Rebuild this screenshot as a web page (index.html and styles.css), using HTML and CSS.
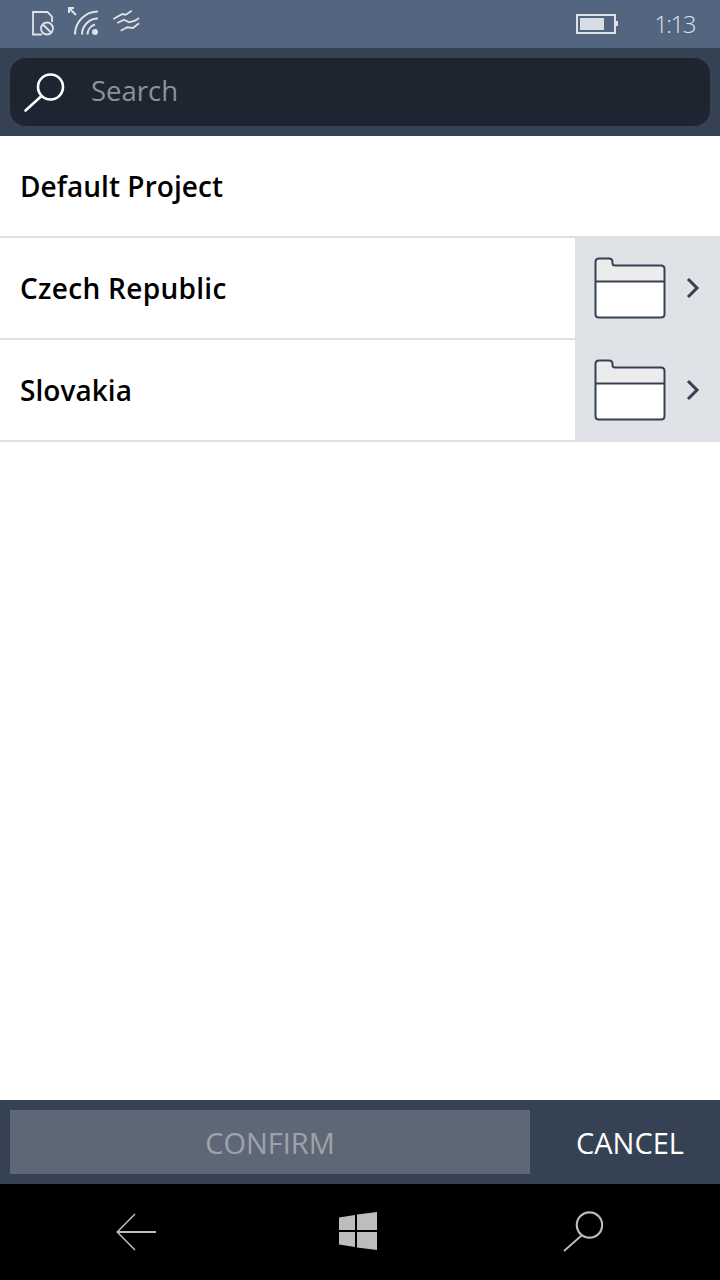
FILE: index.html
```html
<!DOCTYPE html>
<html lang="en">
<head>
<meta charset="utf-8">
<title>Projects</title>
<link rel="stylesheet" href="styles.css">
</head>
<body>
<div class="screen">
  <header class="status">
    <div class="status-left">
      <svg class="ic-doc" width="22" height="25" viewBox="0 0 22 25" fill="none" stroke="#dfe2e7" stroke-width="1.8">
        <path d="M10 23.500H1V1H15.500L20 5.500V11"/>
        <circle cx="15" cy="17.500" r="6"/>
        <path d="M11 13.500L19 21.500"/>
      </svg>
      <svg class="ic-wifi" width="32" height="30" viewBox="0 0 32 30" fill="none" stroke="#dfe2e7" stroke-width="2">
        <path d="M8 9L1.500 2.500M1 7V2H6"/>
        <path d="M7 28.500A23 23 0 0 1 30 5.500"/>
        <path d="M14 28.500A16 16 0 0 1 30 12.500"/>
        <path d="M19.500 28.500A10.500 10.500 0 0 1 27 18.500"/>
        <circle cx="27" cy="26" r="3" fill="#dfe2e7" stroke="none"/>
      </svg>
      <svg class="ic-sig" width="28" height="24" viewBox="0 0 28 24" fill="none" stroke="#dfe2e7" stroke-width="1.800">
        <path d="M1.300 10L10.300 5L13.700 5.700L19.700 1.700"/>
        <path d="M5.300 14L12 10.700L17 13.300L23 11.700L27 9"/>
        <path d="M8.700 21.700L15.300 18.300L21 19L27 14.300"/>
      </svg>
    </div>
    <div class="status-right">
      <svg class="ic-batt" width="42" height="20" viewBox="0 0 42 20">
        <rect x="1" y="1" width="38" height="18" fill="none" stroke="#dfe2e7" stroke-width="2"/>
        <rect x="4" y="4" width="24" height="12" fill="#d8dce3"/>
        <rect x="39" y="7" width="3" height="5" fill="#dfe2e7"/>
      </svg>
      <span class="clock">1:13</span>
    </div>
  </header>

  <div class="searchbar">
    <div class="field">
      <svg class="ic-search" width="44" height="44" viewBox="0 0 44 44" fill="none" stroke="#fff" stroke-width="2.600">
        <circle cx="27.500" cy="16" r="12.500"/>
        <path d="M18.500 25L2.500 39.500" stroke-linecap="round"/>
      </svg>
      <span class="placeholder">Search</span>
    </div>
  </div>

  <main class="list">
    <div class="row"><span class="name">Default Project</span></div>
    <div class="row">
      <span class="name name-wide">Czech Republic</span>
      <div class="drill">
        <svg width="72" height="62" viewBox="0 0 72 62">
          <path d="M1.500 13V5C1.500 3 3 1.500 5 1.500H17C19 1.500 20.500 3 20.500 5V8H66C69 8 70.500 9.500 70.500 12V24H1.500Z" fill="#ececec"/>
          <path d="M1.500 24H70.500V57C70.500 59.500 69 60.500 67 60.500H5C3 60.500 1.500 59.500 1.500 57Z" fill="#fff"/>
          <path d="M1.500 24V5C1.500 3 3 1.500 5 1.500H15C17.500 1.500 18.500 3 18.500 5V6C18.500 7.500 19.500 8.500 21 8.500H67C69 8.500 70.500 10 70.500 12V57C70.500 59 69 60.500 67 60.500H5C3 60.500 1.500 59 1.500 57ZM1.500 24.500H70.500" fill="none" stroke="#364052" stroke-width="2"/>
        </svg>
        <svg class="chev" width="14" height="22" viewBox="0 0 14 22" fill="none" stroke="#364052" stroke-width="3"><path d="M2 2L11 11L2 20"/></svg>
      </div>
    </div>
    <div class="row">
      <span class="name">Slovakia</span>
      <div class="drill">
        <svg width="72" height="62" viewBox="0 0 72 62">
          <path d="M1.500 13V5C1.500 3 3 1.500 5 1.500H17C19 1.500 20.500 3 20.500 5V8H66C69 8 70.500 9.500 70.500 12V24H1.500Z" fill="#ececec"/>
          <path d="M1.500 24H70.500V57C70.500 59.500 69 60.500 67 60.500H5C3 60.500 1.500 59.500 1.500 57Z" fill="#fff"/>
          <path d="M1.500 24V5C1.500 3 3 1.500 5 1.500H15C17.500 1.500 18.500 3 18.500 5V6C18.500 7.500 19.500 8.500 21 8.500H67C69 8.500 70.500 10 70.500 12V57C70.500 59 69 60.500 67 60.500H5C3 60.500 1.500 59 1.500 57ZM1.500 24.500H70.500" fill="none" stroke="#364052" stroke-width="2"/>
        </svg>
        <svg class="chev" width="14" height="22" viewBox="0 0 14 22" fill="none" stroke="#364052" stroke-width="3"><path d="M2 2L11 11L2 20"/></svg>
      </div>
    </div>
  </main>

  <footer class="actions">
    <div class="btn-confirm">CONFIRM</div>
    <div class="btn-cancel">CANCEL</div>
  </footer>

  <nav class="navbar">
    <svg width="40" height="38" viewBox="0 0 40 38" fill="none" stroke="#bdbdbd"><path d="M19 1L1.200 19L19 37" stroke-width="1.500"/><path d="M2 19H40" stroke-width="2"/></svg>
    <svg class="nav-win" width="38" height="38" viewBox="0 0 38 38" fill="#bdbdbd"><path d="M0 5.500L16 3V18H0ZM18 2.500L38 0V18H18ZM0 20H16V35L0 32.500ZM18 20H38V38L18 35.500Z"/></svg>
    <svg class="nav-search" width="40" height="41" viewBox="0 0 40 41" fill="none" stroke="#bdbdbd"><circle cx="26.500" cy="14" r="12.700" stroke-width="2.200"/><path d="M18.500 24.500L1 40" stroke-width="1.800"/></svg>
  </nav>
</div>
</body>
</html>
```
FILE: styles.css
```css
* { box-sizing: border-box; }
html, body { margin: 0; padding: 0; background: #fff; }
.screen {
  width: 720px;
  height: 1280px;
  display: flex;
  flex-direction: column;
  overflow: hidden;
  font-family: "Open Sans", "Noto Sans", "Liberation Sans", sans-serif;
}
.status {
  height: 48px;
  background: #53657f;
  display: flex;
  justify-content: space-between;
  align-items: center;
  padding: 0 25px 0 32px;
}
.status-left { display: flex; align-items: flex-start; height: 48px; }
.ic-doc { margin-top: 11px; }
.ic-wifi { margin: 6px 0 0 14px; }
.ic-sig { margin: 9px 0 0 12px; }
.status-right { display: flex; align-items: center; }
.ic-batt { margin-right: 36px; margin-top: -1px; }
.clock {
  color: #dfe2e7;
  font-size: 24px;
  font-weight: 300;
  line-height: 48px;
  letter-spacing: -1.500px;
}
.searchbar {
  height: 88px;
  background: #354254;
  padding: 10px;
}
.field {
  height: 68px;
  background: #1f2530;
  border-radius: 16px;
  display: flex;
  align-items: center;
  padding-left: 13px;
}
.ic-search { flex: none; margin-top: 2px; }
.placeholder {
  margin-left: 24px;
  margin-bottom: 4px;
  color: #8d929a;
  font-size: 27.500px;
  font-weight: 400;
}
.list { flex: 1; background: #fff; }
.row {
  height: 102px;
  border-bottom: 2px solid #e0e0e0;
  display: flex;
  align-items: center;
  justify-content: space-between;
  padding-left: 20px;
}
.name {
  color: #000;
  font-size: 28px;
  font-weight: 600;
  letter-spacing: 0.05px;
}
.name-wide { letter-spacing: 0.3px; }
.drill {
  width: 145px;
  height: 100px;
  background: #dfe2e6;
  display: flex;
  align-items: center;
  padding-left: 19px;
}
.chev { margin-left: 20px; }
.actions {
  height: 84px;
  background: #354254;
  display: flex;
  padding: 10px 0 10px 10px;
}
.btn-confirm {
  width: 520px;
  background: #5e6776;
  color: #9ea3ab;
  font-size: 29px;
  display: flex;
  align-items: center;
  justify-content: center;
}
.btn-cancel {
  flex: 1;
  color: #fff;
  font-size: 29px;
  padding-left: 10px;
  display: flex;
  align-items: center;
  justify-content: center;
}
.navbar {
  height: 96px;
  background: #000;
  display: flex;
  align-items: center;
  padding-left: 116px;
}
.nav-win { margin: -2px 186px 0 183px; }
.nav-search { margin-top: -2px; }
```
